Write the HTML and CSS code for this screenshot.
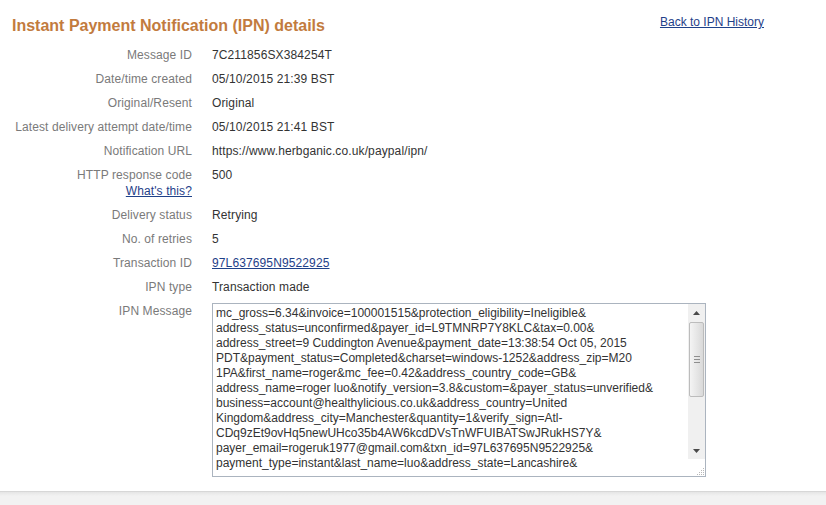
FILE: index.html
```html
<!DOCTYPE html>
<html lang="en">
<head>
<meta charset="utf-8">
<title>IPN details</title>
<link rel="stylesheet" href="styles.css">
</head>
<body>
<div class="page">
  <div class="header">
    <h1 class="title">Instant Payment Notification (IPN) details</h1>
    <a class="back" href="#">Back to IPN History</a>
  </div>
  <dl class="details">
    <div class="row"><dt>Message ID</dt><dd>7C211856SX384254T</dd></div>
    <div class="row"><dt>Date/time created</dt><dd>05/10/2015 21:39 BST</dd></div>
    <div class="row"><dt>Original/Resent</dt><dd>Original</dd></div>
    <div class="row"><dt>Latest delivery attempt date/time</dt><dd>05/10/2015 21:41 BST</dd></div>
    <div class="row"><dt>Notification URL</dt><dd>https://www.herbganic.co.uk/paypal/ipn/</dd></div>
    <div class="row"><dt>HTTP response code<a class="help" href="#">What's this?</a></dt><dd>500</dd></div>
    <div class="row"><dt>Delivery status</dt><dd>Retrying</dd></div>
    <div class="row"><dt>No. of retries</dt><dd>5</dd></div>
    <div class="row"><dt>Transaction ID</dt><dd><a class="link" href="#">97L637695N9522925</a></dd></div>
    <div class="row"><dt>IPN type</dt><dd>Transaction made</dd></div>
    <div class="row"><dt>IPN Message</dt><dd>
      <div class="msg">
<textarea class="msg-text" readonly>mc_gross=6.34&amp;invoice=100001515&amp;protection_eligibility=Ineligible&amp;
address_status=unconfirmed&amp;payer_id=L9TMNRP7Y8KLC&amp;tax=0.00&amp;
address_street=9 Cuddington Avenue&amp;payment_date=13:38:54 Oct 05, 2015
PDT&amp;payment_status=Completed&amp;charset=windows-1252&amp;address_zip=M20
1PA&amp;first_name=roger&amp;mc_fee=0.42&amp;address_country_code=GB&amp;
address_name=roger luo&amp;notify_version=3.8&amp;custom=&amp;payer_status=unverified&amp;
business=account@healthylicious.co.uk&amp;address_country=United
Kingdom&amp;address_city=Manchester&amp;quantity=1&amp;verify_sign=Atl-
CDq9zEt9ovHq5newUHco35b4AW6kcdDVsTnWFUIBATSwJRukHS7Y&amp;
payer_email=rogeruk1977@gmail.com&amp;txn_id=97L637695N9522925&amp;
payment_type=instant&amp;last_name=luo&amp;address_state=Lancashire&amp;</textarea>
        <div class="sb" aria-hidden="true">
          <div class="sb-btn"><svg width="7" height="4" viewBox="0 0 7 4"><path d="M0 4 L3.5 0 L7 4 Z" fill="#4a4a4a"/></svg></div>
          <div class="sb-track">
            <div class="sb-thumb"><span></span><span></span><span></span></div>
          </div>
          <div class="sb-btn"><svg width="7" height="4" viewBox="0 0 7 4"><path d="M0 0 L7 0 L3.5 4 Z" fill="#4a4a4a"/></svg></div>
          <div class="sb-corner"><svg width="9" height="9" viewBox="0 0 9 9"><g fill="#b8b8b8"><rect x="7" y="1" width="1" height="1"/><rect x="5" y="3" width="1" height="1"/><rect x="7" y="3" width="1" height="1"/><rect x="3" y="5" width="1" height="1"/><rect x="5" y="5" width="1" height="1"/><rect x="7" y="5" width="1" height="1"/><rect x="1" y="7" width="1" height="1"/><rect x="3" y="7" width="1" height="1"/><rect x="5" y="7" width="1" height="1"/><rect x="7" y="7" width="1" height="1"/></g></svg></div>
        </div>
      </div>
    </dd></div>
  </dl>
</div>
<div class="footer"></div>
</body>
</html>
```

FILE: styles.css
```css
html, body {
  margin: 0;
  padding: 0;
  overflow: hidden;
}
body {
  font-family: "Liberation Sans", Arial, sans-serif;
  font-size: 12px;
  color: #333;
  background: #fff;
}
.page {
  padding-bottom: 10px;
}
.header {
  display: flex;
  align-items: flex-start;
  padding: 14px 62px 0 12px;
}
.title {
  margin: 2px 0 0;
  font-size: 16px;
  line-height: 20px;
  font-weight: bold;
  color: #c27b3e;
}
.back {
  margin-left: auto;
  line-height: 16px;
  color: #1f4189;
  text-decoration: underline;
}
.details {
  margin: 7px 0 0;
  display: grid;
  grid-template-columns: 192px 1fr;
  column-gap: 20px;
}
.row {
  display: contents;
}
.details dt {
  margin: 0;
  padding: 4px 0;
  line-height: 16px;
  text-align: right;
  color: #7a7a7a;
  letter-spacing: 0.1px;
}
.details dd {
  margin: 0;
  padding: 4px 0;
  line-height: 16px;
  color: #333;
  letter-spacing: 0.12px;
}
.help {
  display: block;
  color: #1f4189;
  text-decoration: underline;
}
.link {
  color: #1f4189;
  text-decoration: underline;
}
.msg {
  position: relative;
  width: 494px;
  height: 174px;
}
.msg-text {
  display: block;
  box-sizing: border-box;
  width: 100%;
  height: 100%;
  margin: 0;
  border: 1px solid #abb4bf;
  padding: 2px 20px 2px 3px;
  font-family: "Liberation Sans", Arial, sans-serif;
  font-size: 12px;
  line-height: 15px;
  color: #333;
  background: #fff;
  resize: none;
  overflow: hidden;
  white-space: pre;
  outline: none;
}
.sb {
  position: absolute;
  top: 1px;
  right: 1px;
  bottom: 1px;
  width: 17px;
  display: flex;
  flex-direction: column;
  background: #f0f0f0;
}
.sb-btn {
  height: 17px;
  display: flex;
  align-items: center;
  justify-content: center;
  flex: none;
}
.sb-track {
  flex: 1;
  padding: 1px 1px 0;
}
.sb-thumb {
  height: 73px;
  border: 1px solid #bcbcbc;
  border-radius: 2px;
  background: linear-gradient(to right, #f4f4f4, #e4e4e4 60%, #d9d9d9);
  display: flex;
  flex-direction: column;
  align-items: center;
  justify-content: center;
  gap: 2px;
}
.sb-thumb span {
  display: block;
  width: 6px;
  height: 1px;
  background: #8e8e8e;
}
.sb-corner {
  height: 17px;
  flex: none;
  display: flex;
  align-items: flex-end;
  justify-content: flex-end;
  background: #fff;
}
.footer {
  height: 13px;
  border-top: 1px solid #d7d7d7;
  background: linear-gradient(#e5e5e5, #f2f2f2 4px);
}
```
